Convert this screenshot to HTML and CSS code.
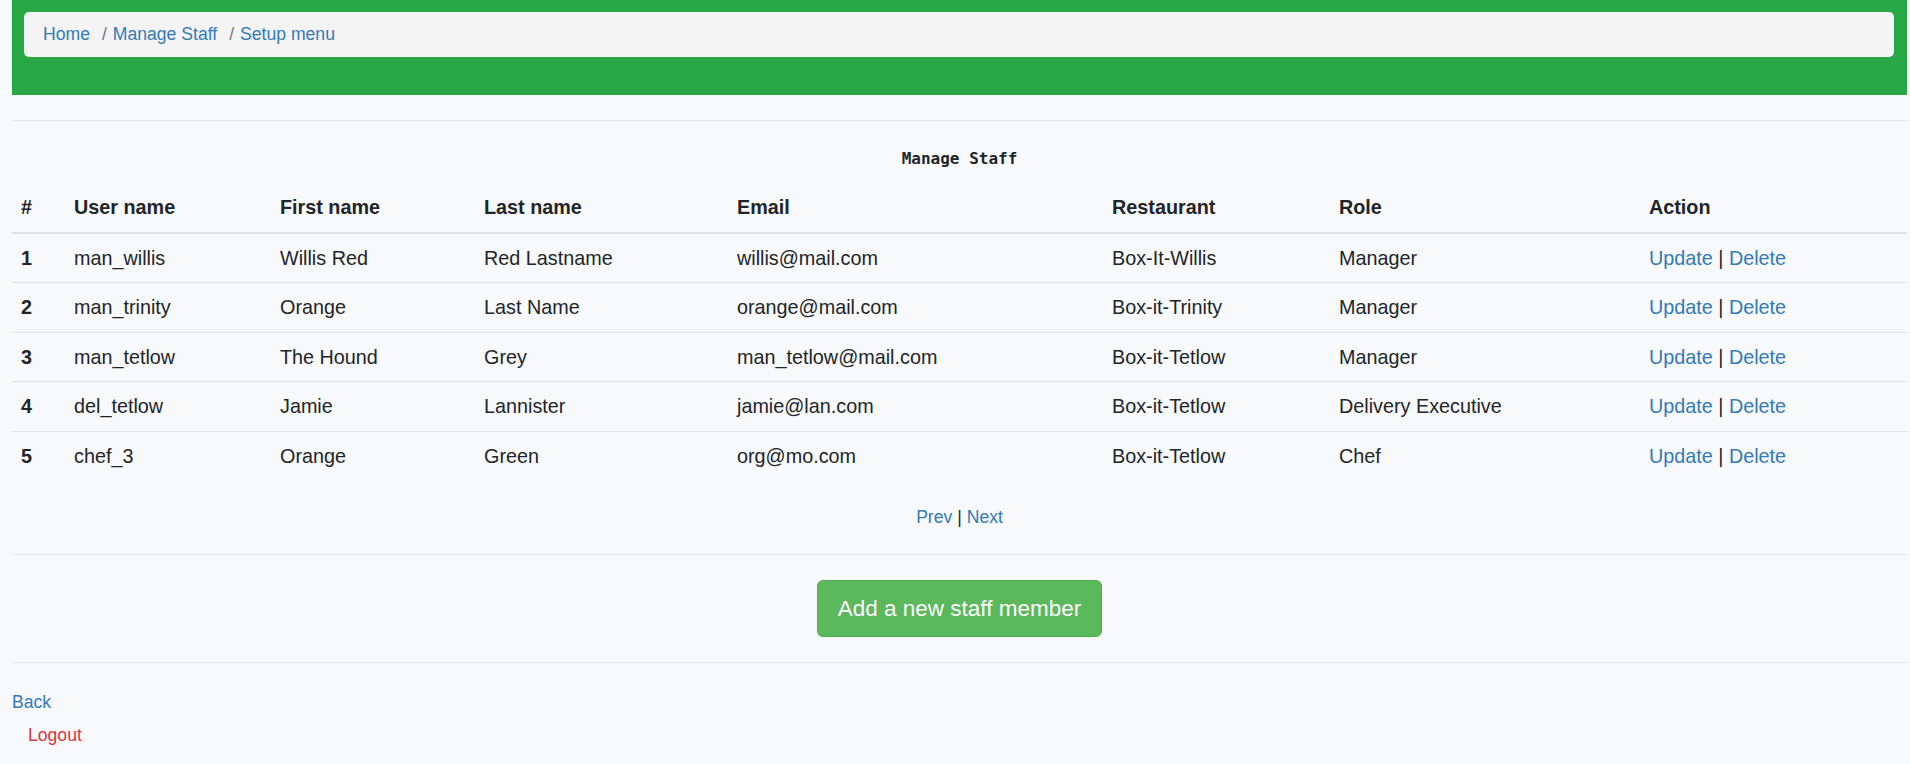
FILE: index.html
```html
<!DOCTYPE html>
<html lang="en">
<head>
<meta charset="utf-8">
<title>Manage Staff</title>
<link rel="stylesheet" href="styles.css">
</head>
<body>
<header class="topbar">
  <nav class="crumbs">
    <a class="crumb" href="#">Home</a>
    <a class="crumb crumb-sep" href="#">Manage Staff</a>
    <a class="crumb crumb-sep" href="#">Setup menu</a>
  </nav>
</header>
<hr class="rule rule-top">
<main class="staff">
  <h1 class="title">Manage Staff</h1>
  <table class="staff-table">
    <colgroup>
      <col class="c-num"><col class="c-user"><col class="c-first"><col class="c-last">
      <col class="c-mail"><col class="c-rest"><col class="c-role"><col class="c-act">
    </colgroup>
    <thead>
      <tr><th>#</th><th>User name</th><th>First name</th><th>Last name</th><th>Email</th><th>Restaurant</th><th>Role</th><th>Action</th></tr>
    </thead>
    <tbody>
      <tr><th>1</th><td>man_willis</td><td>Willis Red</td><td>Red Lastname</td><td>willis@mail.com</td><td>Box-It-Willis</td><td>Manager</td><td><a href="#">Update</a> | <a href="#">Delete</a></td></tr>
      <tr><th>2</th><td>man_trinity</td><td>Orange</td><td>Last Name</td><td>orange@mail.com</td><td>Box-it-Trinity</td><td>Manager</td><td><a href="#">Update</a> | <a href="#">Delete</a></td></tr>
      <tr><th>3</th><td>man_tetlow</td><td>The Hound</td><td>Grey</td><td>man_tetlow@mail.com</td><td>Box-it-Tetlow</td><td>Manager</td><td><a href="#">Update</a> | <a href="#">Delete</a></td></tr>
      <tr><th>4</th><td>del_tetlow</td><td>Jamie</td><td>Lannister</td><td>jamie@lan.com</td><td>Box-it-Tetlow</td><td>Delivery Executive</td><td><a href="#">Update</a> | <a href="#">Delete</a></td></tr>
      <tr><th>5</th><td>chef_3</td><td>Orange</td><td>Green</td><td>org@mo.com</td><td>Box-it-Tetlow</td><td>Chef</td><td><a href="#">Update</a> | <a href="#">Delete</a></td></tr>
    </tbody>
  </table>
  <p class="pager"><a href="#">Prev</a> | <a href="#">Next</a></p>
</main>
<hr class="rule rule-mid">
<div class="add-row"><a class="btn-add" href="#">Add a new staff member</a></div>
<hr class="rule rule-bottom">
<footer class="foot">
  <a class="back" href="#">Back</a>
  <a class="logout" href="#">Logout</a>
</footer>
</body>
</html>
```
FILE: styles.css
```css
html, body {
  margin: 0;
}
body {
  padding: 0 3px 0 12px;
  background: #f8f9fa;
  color: #212529;
  font-family: "Liberation Sans", Arial, sans-serif;
  font-size: 17.6px;
}
a {
  color: #337ab7;
  text-decoration: none;
}

.topbar {
  background: #28a745;
  padding: 12px 13px 38px 12px;
}
.crumbs {
  display: flex;
  align-items: center;
  height: 45px;
  padding: 0 19px;
  background: #f4f4f4;
  border-radius: 5px;
  font-size: 17.6px;
}
.crumb-sep {
  padding-left: 12px;
}
.crumb-sep::before {
  content: "/";
  color: #6c757d;
  padding-right: 6px;
}

.rule {
  border: 0;
  border-top: 1px solid #e4e5e7;
  margin: 0;
  height: 0;
}
.rule-top {
  margin-top: 25px;
}

.title {
  margin: 28px 0 14px;
  font-family: "DejaVu Sans Mono", "Liberation Mono", monospace;
  font-size: 16px;
  line-height: 20px;
  font-weight: bold;
  text-align: center;
}

.staff-table {
  width: 100%;
  table-layout: fixed;
  border-collapse: collapse;
  font-size: 19.8px;
  line-height: 24.5px;
}
.c-num { width: 53px; }
.c-user { width: 206px; }
.c-first { width: 204px; }
.c-last { width: 253px; }
.c-mail { width: 375px; }
.c-rest { width: 227px; }
.c-role { width: 310px; }
.c-act { width: 267px; }

.staff-table th,
.staff-table td {
  padding: 12px 9px;
  text-align: left;
  vertical-align: top;
  white-space: nowrap;
}
.staff-table thead th {
  border-bottom: 2px solid #dee2e6;
}
.staff-table tbody tr + tr th,
.staff-table tbody tr + tr td {
  border-top: 1px solid #dee2e6;
}

.pager {
  margin: 24px 0 24px;
  line-height: 26px;
  text-align: center;
}

.add-row {
  display: flex;
  justify-content: center;
  padding: 25px 0;
}
.btn-add {
  display: block;
  padding: 11px 20px;
  background: #5cb85c;
  border: 1px solid #4cae4c;
  border-radius: 6px;
  color: #fff;
  font-size: 22.5px;
  line-height: 33px;
}

.foot {
  display: flex;
  flex-direction: column;
  align-items: flex-start;
  gap: 7px;
  padding-top: 26px;
  line-height: 26px;
}
.logout {
  margin-left: 16px;
  color: #dc3545;
}
```
